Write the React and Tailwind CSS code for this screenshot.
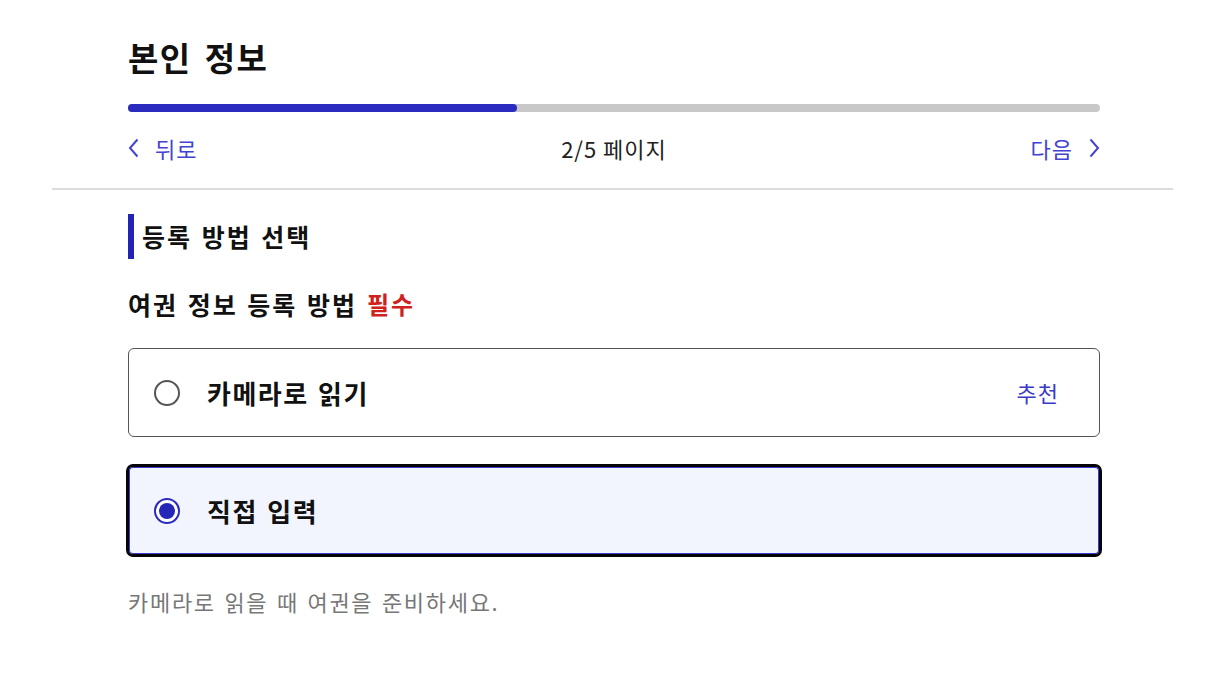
import React from "react";

const font = { fontFamily: '"Noto Sans CJK KR", "Noto Sans", sans-serif' };

export default function App() {
  return (
    <div className="min-h-[687px] w-[1209px] bg-white text-[#111]" style={font}>
      <div className="ml-[52px] w-[1121px]">
        <div className="pl-[76px] pr-[73px] pt-[34px]">
          <h1 className="text-[33px] font-bold leading-[46px] tracking-[1.5px] [word-spacing:4px]">본인 정보</h1>
          <div className="mt-[24px] h-[8px] w-full rounded-full bg-[#c8c8c8]">
            <div className="h-full w-[40%] rounded-full bg-[#2b2bbf]" />
          </div>
          <div className="mt-[20px] flex h-[32px] items-center justify-between text-[22px] leading-none">
            <button className="flex items-center gap-[16px] text-[#4343d0] tracking-[1px]">
              <svg width="11" height="20" viewBox="0 0 11 20" fill="none">
                <path d="M9.5 1.5 L2 10 L9.5 18.5" stroke="#4343d0" strokeWidth="2" />
              </svg>
              <span>뒤로</span>
            </button>
            <span className="text-[#222] tracking-[1px]">2/5 페이지</span>
            <button className="flex items-center gap-[16px] text-[#4343d0] tracking-[1px]">
              <span>다음</span>
              <svg width="11" height="20" viewBox="0 0 11 20" fill="none">
                <path d="M1.5 1.5 L9 10 L1.5 18.5" stroke="#4343d0" strokeWidth="2" />
              </svg>
            </button>
          </div>
        </div>
        <div className="mt-[24px] h-[2px] bg-[#dcdcdc]" />
        <div className="pl-[76px] pr-[73px]">
          <div className="mt-[24px] flex h-[45px] items-center border-l-[6px] border-[#2323b5] pl-[8px]">
            <h2 className="text-[25px] font-bold leading-none tracking-[2px] [word-spacing:2px]">등록 방법 선택</h2>
          </div>
          <div className="mt-[30px] flex h-[30px] items-center text-[25px] font-semibold leading-none tracking-[2px] [word-spacing:2px]">
            <span>여권 정보 등록 방법</span>
            <span className="ml-[10px] text-[24px] text-[#d0221d]">필수</span>
          </div>
          <div className="mt-[29px] flex h-[89px] items-center rounded-[6px] border border-[#555] bg-white pl-[25px] pr-[40px]">
            <span className="h-[26px] w-[26px] shrink-0 rounded-full border-2 border-[#555] bg-white" />
            <span className="ml-[27px] text-[26px] font-bold tracking-[1.5px] [word-spacing:2px]">카메라로 읽기</span>
            <span className="ml-auto text-[22px] text-[#3a3ac8] tracking-[1px]">추천</span>
          </div>
          <div className="-mx-[2px] mt-[27px] flex h-[93px] items-center rounded-[7px] border-[3px] border-[#050508] bg-[#f2f5fd] pl-[25px] shadow-[inset_0_0_0_1px_#3a3ad0]">
            <span className="flex h-[26px] w-[26px] shrink-0 items-center justify-center rounded-full border-2 border-[#2b2bbf] bg-white">
              <span className="h-[16px] w-[16px] rounded-full bg-[#2525b8]" />
            </span>
            <span className="ml-[27px] text-[26px] font-bold tracking-[1.5px] [word-spacing:2px]">직접 입력</span>
          </div>
          <p className="mt-[28px] text-[22px] leading-[32px] text-[#777] tracking-[1.7px] [word-spacing:2px]">카메라로 읽을 때 여권을 준비하세요.</p>
        </div>
      </div>
    </div>
  );
}
